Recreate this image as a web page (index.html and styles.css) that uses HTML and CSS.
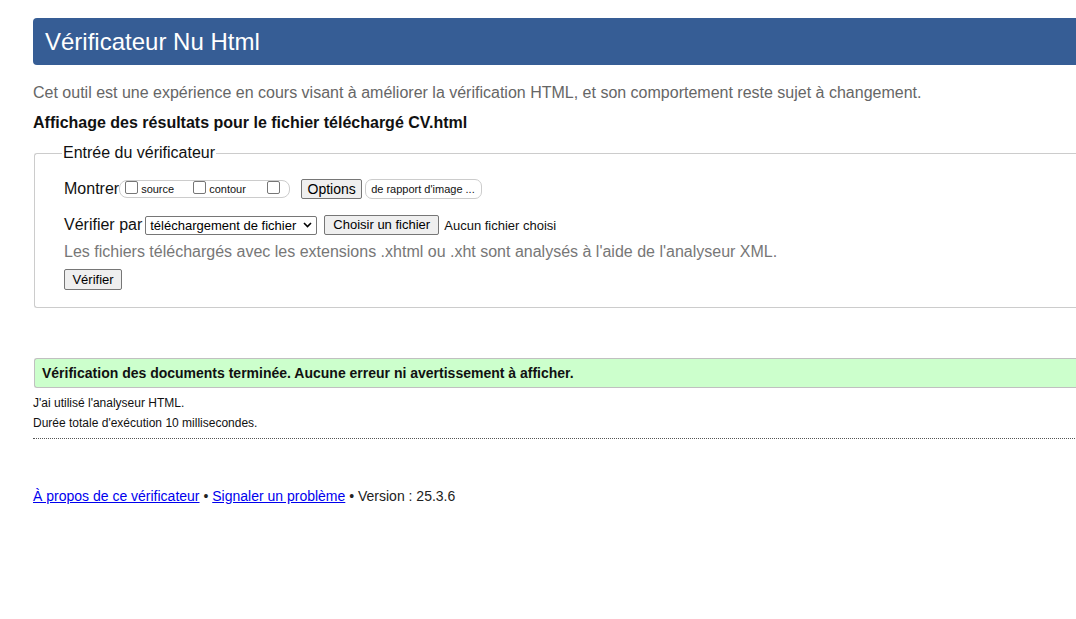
FILE: index.html
```html
<!DOCTYPE html>
<html lang="fr">
<head>
<meta charset="utf-8">
<title>Vérificateur Nu Html</title>
<link rel="stylesheet" href="styles.css">
</head>
<body>
<div class="page">
  <h1 class="title">Vérificateur Nu Html</h1>
  <p class="intro">Cet outil est une expérience en cours visant à améliorer la vérification HTML, et son comportement reste sujet à changement.</p>
  <p class="showing">Affichage des résultats pour le fichier téléchargé CV.html</p>
  <fieldset class="checker">
    <legend class="legend">Entrée du vérificateur</legend>
    <div class="row row-show">
      <span class="label">Montrer</span>
      <span class="group">
        <label class="opt"><span class="cb"></span>source</label>
        <label class="opt"><span class="cb"></span>contour</label>
        <label class="opt"><span class="cb"></span></label>
      </span>
      <span class="btn btn-options">Options</span>
      <span class="pill">de rapport d'image ...</span>
    </div>
    <div class="row row-check">
      <span class="label">Vérifier par</span>
      <span class="select">téléchargement de fichier<svg class="chev" width="9" height="6" viewBox="0 0 9 6"><path d="M1 1 L4.5 4.5 L8 1" fill="none" stroke="#000" stroke-width="1.6"/></svg></span>
      <span class="btn btn-file">Choisir un fichier</span>
      <span class="nofile">Aucun fichier choisi</span>
    </div>
    <p class="hint">Les fichiers téléchargés avec les extensions .xhtml ou .xht sont analysés à l'aide de l'analyseur XML.</p>
    <div class="row row-submit">
      <span class="btn btn-submit">Vérifier</span>
    </div>
  </fieldset>
  <div class="success">Vérification des documents terminée. Aucune erreur ni avertissement à afficher.</div>
  <p class="details">J'ai utilisé l'analyseur HTML.</p>
  <p class="details">Durée totale d'exécution 10 millisecondes.</p>
  <hr class="sep">
  <p class="footer"><a href="#">À propos de ce vérificateur</a> • <a href="#">Signaler un problème</a> • Version : 25.3.6</p>
</div>
</body>
</html>
```
FILE: styles.css
```css
html, body {
  margin: 0;
  padding: 0;
  overflow: hidden;
  background: #fff;
}
body {
  font-family: "Liberation Sans", Arial, sans-serif;
  color: #222;
}
.page {
  width: 1150px;
  padding: 18px 0 0 33px;
}
.title {
  margin: 0;
  height: 47px;
  box-sizing: border-box;
  background: #365d95;
  color: #fff;
  font-weight: normal;
  font-size: 24px;
  line-height: 47px;
  padding-left: 12px;
  border-radius: 4px 0 0 4px;
}
.intro {
  margin: 18px 0 0;
  font-size: 16px;
  line-height: 20px;
  color: #666;
}
.showing {
  margin: 10px 0 0;
  font-size: 16px;
  font-weight: bold;
  line-height: 20px;
  color: #111;
}
.checker {
  margin: 11px 0 0 1px;
  padding: 14px 0 17px 29px;
  border: 1px solid #ccc;
  border-right: none;
  border-radius: 3px 0 0 3px;
}
.legend {
  font-size: 16px;
  padding: 0 1px;
  margin-left: -2px;
  color: #111;
}
.row {
  display: flex;
  align-items: center;
}
.label {
  font-size: 16px;
  color: #111;
}
.group {
  display: inline-flex;
  align-items: center;
  height: 18px;
  box-sizing: border-box;
  border: 1px solid #ccc;
  border-radius: 8px;
  padding: 0 8px 0 5px;
  margin-right: 11px;
  width: 171px;
}
.opt {
  display: inline-flex;
  align-items: center;
  font-size: 11px;
  color: #111;
  margin-right: 19px;
}
.opt:last-child { margin-right: 0; margin-left: 2px; }
.cb {
  display: inline-block;
  width: 11px;
  height: 11px;
  border: 1px solid #767676;
  border-radius: 2px;
  margin-right: 3px;
  margin-top: -3px;
}
.btn {
  display: inline-block;
  box-sizing: border-box;
  font-size: 13px;
  color: #000;
  background: #efefef;
  border: 1px solid #767676;
  border-radius: 2px;
  line-height: 18px;
  padding: 0 7px;
}
.btn-options {
  font-size: 14px;
  height: 20px;
  width: 61px;
  text-align: center;
  padding: 0;
}
.pill {
  display: inline-block;
  box-sizing: border-box;
  margin-left: 3px;
  height: 20px;
  width: 117px;
  border: 1px solid #ccc;
  border-radius: 7px;
  font-size: 11px;
  line-height: 18px;
  padding-left: 5px;
  color: #111;
}
.row-show { margin-top: 3px; }
.row-check { margin-top: 16px; }
.select {
  display: inline-flex;
  align-items: center;
  justify-content: space-between;
  box-sizing: border-box;
  margin-left: 3px;
  width: 172px;
  height: 19px;
  border: 1px solid #767676;
  border-radius: 2px;
  font-size: 13px;
  padding: 0 4px 0 4px;
  color: #000;
}
.chev { margin-left: 2px; }
.btn-file {
  margin-left: 7px;
  height: 20px;
  width: 115px;
  text-align: center;
  padding: 0;
}
.nofile {
  font-size: 13px;
  margin-left: 5px;
  color: #111;
}
.hint {
  margin: 7px 0 0;
  font-size: 16px;
  line-height: 20px;
  color: #777;
}
.row-submit { margin-top: 7px; }
.btn-submit {
  height: 21px;
  width: 58px;
  text-align: center;
  padding: 0;
  line-height: 19px;
}
.success {
  margin-top: 50px;
  margin-left: 1px;
  height: 30px;
  box-sizing: border-box;
  background: #ccffcc;
  border: 1px solid #c0c0c0;
  border-right: none;
  border-radius: 3px 0 0 3px;
  font-size: 14px;
  font-weight: bold;
  line-height: 28px;
  padding-left: 7px;
  color: #111;
}
.details {
  margin: 6px 0 0;
  font-size: 12px;
  line-height: 14px;
  color: #111;
}
.success + .details { margin-top: 8px; }
.sep {
  margin: 8px 0 0;
  border: none;
  border-top: 1px dotted #555;
  height: 0;
}
.footer {
  margin: 49px 0 0;
  font-size: 14px;
  line-height: 17px;
  color: #222;
}
.footer a { color: #00e; }
```
